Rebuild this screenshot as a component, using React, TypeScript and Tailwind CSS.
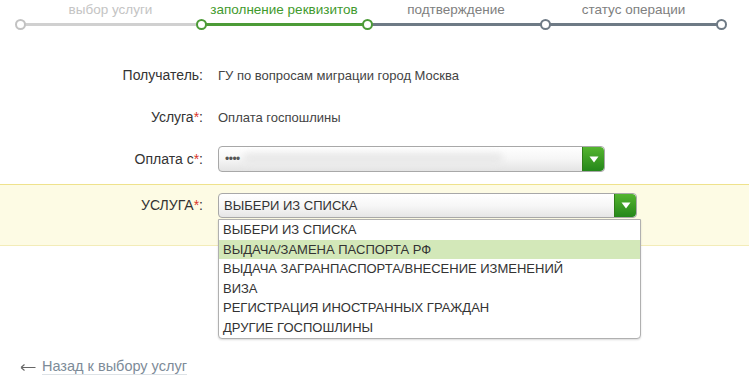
import { ReactNode } from "react";

const steps = [
  { label: "выбор услуги", w: "w-[181px]", text: "text-[#c4c4c4]", line: "bg-[#d0d0d0]", dot: "border-[#c2c2c2]" },
  { label: "заполнение реквизитов", w: "w-[166px]", text: "text-[#3f9a2d]", line: "bg-[#4c9b37]", dot: "border-[#4c9b37]" },
  { label: "подтверждение", w: "w-[178px]", text: "text-[#808080]", line: "bg-[#6e7a85]", dot: "border-[#4c9b37]" },
  { label: "статус операции", w: "w-[177px]", text: "text-[#808080]", line: "bg-[#6e7a85]", dot: "border-[#6e7a85]" },
];

const options = [
  "ВЫБЕРИ ИЗ СПИСКА",
  "ВЫДАЧА/ЗАМЕНА ПАСПОРТА РФ",
  "ВЫДАЧА ЗАГРАНПАСПОРТА/ВНЕСЕНИЕ ИЗМЕНЕНИЙ",
  "ВИЗА",
  "РЕГИСТРАЦИЯ ИНОСТРАННЫХ ГРАЖДАН",
  "ДРУГИЕ ГОСПОШЛИНЫ",
];

function Stepper() {
  return (
    <div className="flex pl-[20px]">
      {steps.map((s, i) => (
        <div key={s.label} className={`relative flex flex-col ${s.w}`}>
          <div className={`h-[22px] text-center text-[13.5px] leading-[18px] ${s.text}`}>
            {s.label}
          </div>
          <div className={`h-[3px] ${s.line}`} />
          <span
            className={`absolute -left-[5px] top-[18px] h-[11px] w-[11px] rounded-full border-2 bg-white ${s.dot}`}
          />
          {i === steps.length - 1 ? (
            <span className="absolute -right-[5px] top-[18px] h-[11px] w-[11px] rounded-full border-2 border-[#6e7a85] bg-white" />
          ) : null}
        </div>
      ))}
    </div>
  );
}

function Row({ label, required, children, className = "" }: { label: string; required?: boolean; children: ReactNode; className?: string }) {
  return (
    <div className={`flex items-center ${className}`}>
      <div className="w-[204px] pr-[1px] text-right text-[14px] text-[#333]">
        {label}
        {required ? <span className="text-[#d9342b]">*</span> : null}:
      </div>
      <div className="pl-[14px]">{children}</div>
    </div>
  );
}

function GreenButton() {
  return (
    <div className="flex h-full w-[22px] items-center justify-center rounded-r-[4px] border-l border-[#2f7d17] bg-gradient-to-b from-[#54b52f] to-[#23871a]">
      <svg width="10" height="7" viewBox="0 0 10 7">
        <path d="M0.5 0.5 L9.5 0.5 L5 6.5 Z" fill="#fff" />
      </svg>
    </div>
  );
}

export default function App() {
  return (
    <div className="h-[389px] w-[749px] overflow-hidden bg-white font-['Liberation_Sans',Arial,sans-serif]">
      <div className="pt-[1px]">
        <Stepper />
      </div>

      <div className="mt-[39px] flex flex-col">
        <Row label="Получатель" className="h-[20px]">
          <span className="text-[13px] text-[#444]">ГУ по вопросам миграции город Москва</span>
        </Row>
        <Row label="Услуга" required className="mt-[22px] h-[20px]">
          <span className="text-[13px] text-[#444]">Оплата госпошлины</span>
        </Row>
        <Row label="Оплата с" required className="mt-[19px]">
          <div className="flex h-[26px] w-[387px] overflow-hidden rounded-[4px] border border-[#a8a8a8] bg-gradient-to-b from-white via-[#f6f6f6] to-[#e4e4e4]">
            <div className="flex flex-1 items-center pl-[6px] text-[12px] leading-none tracking-[-0.5px] text-[#555]">
              ••••
              <span className="ml-[3px] h-[12px] w-[260px] rounded-full bg-[#e9e9e9] blur-[3px]" />
            </div>
            <GreenButton />
          </div>
        </Row>

        <div className="mt-[12px] h-[62px] border-y border-t-[#efe28c] border-b-[#f3ecb8] bg-[#fdfbe4] pt-[8px]">
          <Row label="УСЛУГА" required>
            <div className="relative">
              <div className="flex h-[25px] w-[419px] overflow-hidden rounded-[4px] border border-[#a8a8a8] bg-gradient-to-b from-white via-[#f7f7f7] to-[#e6e6e6]">
                <div className="flex flex-1 items-center pl-[5px] text-[13px] text-[#333]">ВЫБЕРИ ИЗ СПИСКА</div>
                <GreenButton />
              </div>
              <ul className="absolute left-0 top-[26px] z-10 w-[423px] overflow-hidden rounded-b-[4px] border border-[#b0b0b0] bg-white shadow-[0_1px_2px_rgba(0,0,0,0.15)]">
                {options.map((o, i) => (
                  <li
                    key={o}
                    className={`flex h-[19.6px] items-center pl-[4px] text-[13px] text-[#333] ${i === 1 ? "bg-[#d3e8b9]" : ""}`}
                  >
                    {o}
                  </li>
                ))}
              </ul>
            </div>
          </Row>
        </div>

        <div className="mt-[112px] flex items-center pl-[20px] text-[14.5px]">
          <svg width="16" height="9" viewBox="0 0 16 9" className="mt-[1px]">
            <path d="M1 4.5 H15.5 M1 4.5 L4.5 1.5 M1 4.5 L4.5 7.5" stroke="#666" strokeWidth="1.1" fill="none" />
          </svg>
          <a className="ml-[6px] border-b border-[#dde2e6] leading-[16px] text-[#7d8b98]">Назад к выбору услуг</a>
        </div>
      </div>
    </div>
  );
}
